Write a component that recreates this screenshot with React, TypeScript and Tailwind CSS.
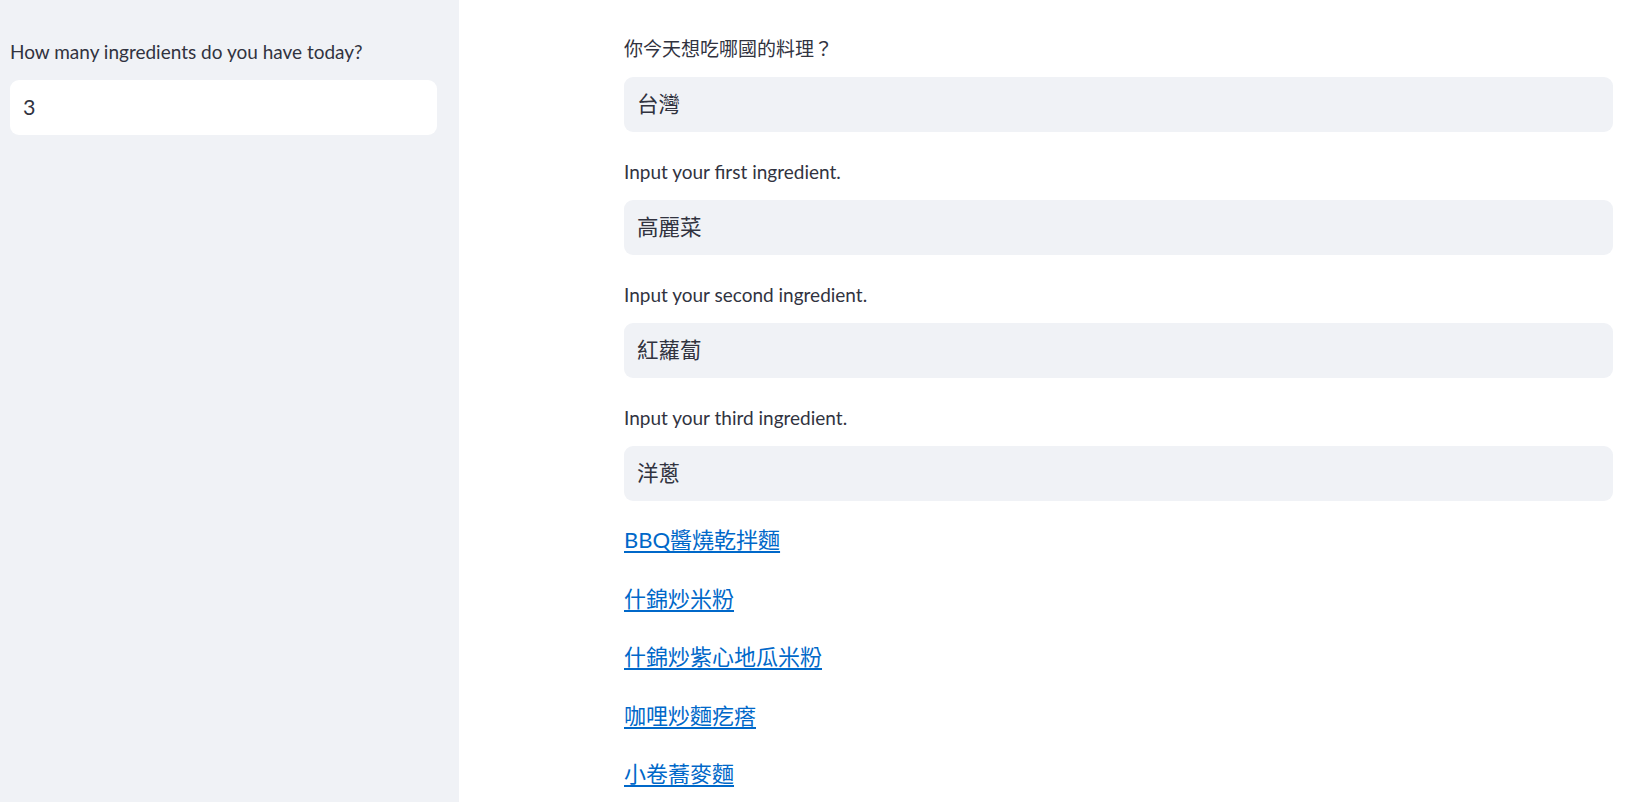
const font = "font-['Lato','Noto_Sans_CJK_TC',sans-serif]";

const fields = [
  { label: "你今天想吃哪國的料理？", value: "台灣" },
  { label: "Input your first ingredient.", value: "高麗菜" },
  { label: "Input your second ingredient.", value: "紅蘿蔔" },
  { label: "Input your third ingredient.", value: "洋蔥" },
];

const recipes = [
  "BBQ醬燒乾拌麵",
  "什錦炒米粉",
  "什錦炒紫心地瓜米粉",
  "咖哩炒麵疙瘩",
  "小卷蕎麥麵",
];

function Field({ label, value, white }: { label: string; value: string; white?: boolean }) {
  return (
    <div className="flex flex-col">
      <label className="h-[26px] leading-[29px] text-[19px] text-[#31333f] mb-[17px]">
        {label}
      </label>
      <div
        className={
          "h-[55px] rounded-[9px] px-[13px] flex items-center text-[21.5px] text-[#31333f] " +
          (white ? "bg-white" : "bg-[#f0f2f6]")
        }
      >
        {value}
      </div>
    </div>
  );
}

export default function App() {
  return (
    <div className={`flex h-[802px] w-full overflow-hidden bg-white ${font}`}>
      <aside className="w-[459px] shrink-0 bg-[#f0f2f6] px-[10px] pt-[37px]">
        <div className="w-[427px]">
          <Field label="How many ingredients do you have today?" value="3" white />
        </div>
      </aside>

      <main className="flex-1 pl-[165px] pr-[20px] pt-[34px]">
        <div className="flex flex-col gap-[25px]">
          {fields.map((f) => (
            <Field key={f.label} label={f.label} value={f.value} />
          ))}
        </div>
        <div className="mt-[23px] flex flex-col gap-[26.5px]">
          {recipes.map((r) => (
            <a
              key={r}
              href="#"
              className="h-[32px] leading-[32px] text-[22px] text-[#0068c9] underline underline-offset-[3px] w-fit"
            >
              {r}
            </a>
          ))}
        </div>
      </main>
    </div>
  );
}
